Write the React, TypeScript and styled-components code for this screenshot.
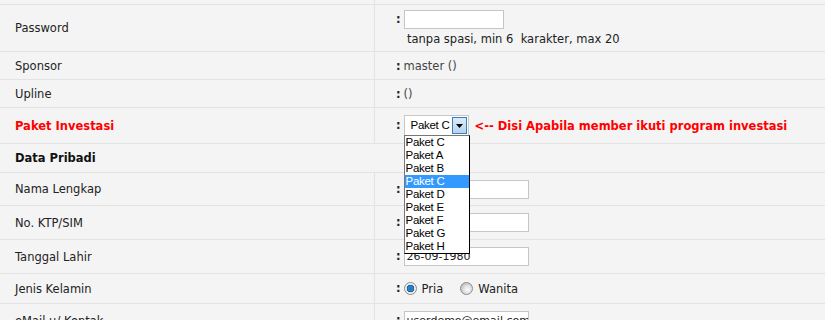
import styled, { createGlobalStyle } from 'styled-components';

const GlobalStyle = createGlobalStyle`
  body {
    margin: 0;
    background: #f4f4f4;
    font-family: "DejaVu Sans", Verdana, sans-serif;
  }
`;

const paketOptions = ['Paket C', 'Paket A', 'Paket B', 'Paket C', 'Paket D', 'Paket E', 'Paket F', 'Paket G', 'Paket H'];

const FormTable = styled.table`
  width: 100%;
  border-collapse: separate;
  border-spacing: 0;
  font-size: 11.5px;
  color: #222;
`;

const Row = styled.tr<{ $h: number }>`
  height: ${({ $h }) => $h}px;
`;

const LabelCell = styled.td<{ $accent?: boolean }>`
  box-sizing: border-box;
  width: 375px;
  padding: 0 0 0 15px;
  border-bottom: 1px solid #e3e3e3;
  border-right: 1px solid #e3e3e3;
  vertical-align: middle;
  color: ${({ $accent }) => ($accent ? '#ff0000' : '#222')};
  font-weight: ${({ $accent }) => ($accent ? 'bold' : 'normal')};
`;

const SectionCell = styled.td`
  box-sizing: border-box;
  padding: 0 0 0 15px;
  border-bottom: 1px solid #e3e3e3;
  vertical-align: middle;
  font-weight: bold;
  color: #111;
`;

const ValueCell = styled.td`
  box-sizing: border-box;
  padding: 0 0 0 21px;
  border-bottom: 1px solid #e3e3e3;
  vertical-align: middle;
  white-space: nowrap;
`;

const Colon = styled.span`
  font-weight: bold;
  margin-right: 3px;
`;

const Muted = styled.span`
  color: #444;
`;

const TextInput = styled.span<{ $w: number }>`
  display: inline-block;
  box-sizing: border-box;
  width: ${({ $w }) => $w}px;
  height: 19px;
  padding: 0 2px;
  border: 1px solid #c6c6c6;
  background: #fff;
  font-size: 11px;
  line-height: 17px;
  color: #222;
  vertical-align: middle;
  overflow: hidden;
`;

const Hint = styled.div`
  margin: 3px 0 0 11px;
  color: #222;
`;

const SelectWrap = styled.span`
  position: relative;
  display: inline-block;
  vertical-align: middle;
`;

const SelectBox = styled.span`
  display: inline-flex;
  align-items: stretch;
  box-sizing: border-box;
  width: 65px;
  height: 21px;
  border: 1px solid #c8c8c8;
  background: #fff;
  font-family: "Liberation Sans", Arial, sans-serif;
  font-size: 11.5px;
  letter-spacing: -0.3px;
  color: #000;
`;

const SelectText = styled.span`
  flex: 1;
  padding-left: 6px;
  line-height: 19px;
`;

const ArrowButton = styled.span`
  display: flex;
  align-items: center;
  justify-content: center;
  width: 15px;
  margin: 1px;
  box-sizing: border-box;
  border: 1px solid #3c7fb1;
  background: linear-gradient(#dbeaf9, #b6d3f1);
`;

const DropList = styled.ul`
  position: absolute;
  top: 20px;
  left: 0;
  z-index: 2;
  box-sizing: border-box;
  width: 66px;
  margin: 0;
  padding: 0;
  list-style: none;
  background: #fff;
  border: 1px solid;
  border-color: #777 #000 #000 #777;
  font-family: "Liberation Sans", Arial, sans-serif;
  font-size: 11.5px;
  letter-spacing: -0.3px;
`;

const DropItem = styled.li<{ $active?: boolean }>`
  height: 13px;
  line-height: 13px;
  padding-left: 1px;
  background: ${({ $active }) => ($active ? '#3399ff' : '#fff')};
  color: ${({ $active }) => ($active ? '#fff' : '#000')};
`;

const Note = styled.span`
  margin-left: 6px;
  color: #ff0000;
  font-weight: bold;
  vertical-align: middle;
`;

const RadioGroup = styled.span`
  display: inline-flex;
  align-items: center;
  vertical-align: middle;
  gap: 5px;
`;

const Radio = styled.span<{ $checked?: boolean }>`
  display: inline-block;
  box-sizing: border-box;
  width: 13px;
  height: 13px;
  border-radius: 50%;
  border: 1px solid #8c8c8c;
  background: ${({ $checked }) =>
    $checked
      ? 'radial-gradient(circle, #1e6fb5 0, #2a8bd6 2.5px, #0c4f8a 3.5px, #e4e4e4 4px, #fafafa 6px)'
      : 'radial-gradient(circle at 60% 60%, #fdfdfd 0, #e0e0e0 4px, #c8c8c8 6px)'};
`;

const RadioLabel = styled.span`
  margin-right: 12px;
`;

const Arrow = () => (
  <svg width="7" height="4" viewBox="0 0 7 4">
    <path d="M0 0h7L3.5 4z" fill="#000" />
  </svg>
);

export default function App() {
  return (
    <>
      <GlobalStyle />
      <FormTable>
        <tbody>
          <Row $h={5}>
            <LabelCell />
            <ValueCell />
          </Row>
          <Row $h={47}>
            <LabelCell>Password</LabelCell>
            <ValueCell>
              <Colon>:</Colon>
              <TextInput $w={100} />
              <Hint>tanpa spasi, min 6&nbsp; karakter, max 20</Hint>
            </ValueCell>
          </Row>
          <Row $h={28}>
            <LabelCell>Sponsor</LabelCell>
            <ValueCell>
              <Colon>:</Colon>
              <Muted>master ()</Muted>
            </ValueCell>
          </Row>
          <Row $h={28}>
            <LabelCell>Upline</LabelCell>
            <ValueCell>
              <Colon>:</Colon>
              <Muted>()</Muted>
            </ValueCell>
          </Row>
          <Row $h={36}>
            <LabelCell $accent>Paket Investasi</LabelCell>
            <ValueCell>
              <Colon>:</Colon>
              <SelectWrap>
                <SelectBox>
                  <SelectText>Paket C</SelectText>
                  <ArrowButton>
                    <Arrow />
                  </ArrowButton>
                </SelectBox>
                <DropList>
                  {paketOptions.map((opt, i) => (
                    <DropItem key={i} $active={i === 3}>
                      {opt}
                    </DropItem>
                  ))}
                </DropList>
              </SelectWrap>
              <Note>&lt;-- Disi Apabila member ikuti program investasi</Note>
            </ValueCell>
          </Row>
          <Row $h={29}>
            <SectionCell colSpan={2}>Data Pribadi</SectionCell>
          </Row>
          <Row $h={33}>
            <LabelCell>Nama Lengkap</LabelCell>
            <ValueCell>
              <Colon>:</Colon>
              <TextInput $w={125} />
            </ValueCell>
          </Row>
          <Row $h={34}>
            <LabelCell>No. KTP/SIM</LabelCell>
            <ValueCell>
              <Colon>:</Colon>
              <TextInput $w={125} />
            </ValueCell>
          </Row>
          <Row $h={34}>
            <LabelCell>Tanggal Lahir</LabelCell>
            <ValueCell>
              <Colon>:</Colon>
              <TextInput $w={125}>26-09-1980</TextInput>
            </ValueCell>
          </Row>
          <Row $h={30}>
            <LabelCell>Jenis Kelamin</LabelCell>
            <ValueCell>
              <Colon>:</Colon>
              <RadioGroup>
                <Radio $checked />
                <RadioLabel>Pria</RadioLabel>
                <Radio />
                <RadioLabel>Wanita</RadioLabel>
              </RadioGroup>
            </ValueCell>
          </Row>
          <Row $h={34}>
            <LabelCell>eMail u/ Kontak</LabelCell>
            <ValueCell>
              <Colon>:</Colon>
              <TextInput $w={125}>userdemo@email.com</TextInput>
            </ValueCell>
          </Row>
        </tbody>
      </FormTable>
    </>
  );
}
